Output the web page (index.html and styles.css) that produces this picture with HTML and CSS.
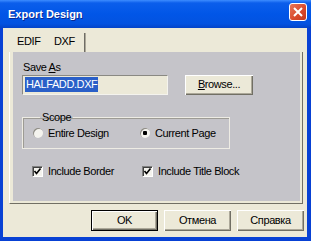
FILE: index.html
```html
<!DOCTYPE html>
<html lang="en">
  <head>
    <meta charset="UTF-8" />
    <title>Export Design</title>
    <link rel="stylesheet" href="styles.css">
  </head>
  <body>
    <div class="window">
      <!-- Title bar -->
      <div class="titlebar">
        <span class="title">Export Design</span>
        <span class="close">
          <svg width="10" height="10" viewBox="0 0 10 10">
            <path d="M1 1 L9 9 M9 1 L1 9" stroke="#fff" stroke-width="2" />
          </svg>
        </span>
      </div>

      <div class="client">
        <!-- Tabs -->
        <div class="tabs">
          <div class="tab">EDIF</div>
          <div class="tab active">DXF</div>
        </div>

        <div class="pane">
          <div class="page">
            <div class="save">
              <div class="field">
                <label>Save <u>A</u>s</label>
                <div class="input"><span class="sel">HALFADD.DXF</span></div>
              </div>
              <div class="btn browse"><u>B</u>rowse...</div>
            </div>

            <fieldset class="scope">
              <legend>Scope</legend>
              <div class="opt wide"><span class="radio"></span>Entire Design</div>
              <div class="opt"><span class="radio on"></span>Current Page</div>
            </fieldset>

            <div class="checks">
              <div class="opt wide2">
                <span class="check">
                  <svg width="9" height="9" viewBox="0 0 9 9">
                    <path d="M1.5 4 L3.5 6.5 L7.5 1.5" fill="none" stroke="#000" stroke-width="1.6" />
                  </svg>
                </span>Include Border
              </div>
              <div class="opt">
                <span class="check">
                  <svg width="9" height="9" viewBox="0 0 9 9">
                    <path d="M1.5 4 L3.5 6.5 L7.5 1.5" fill="none" stroke="#000" stroke-width="1.6" />
                  </svg>
                </span>Include Title Block
              </div>
            </div>
          </div>
        </div>

        <!-- Dialog buttons -->
        <div class="buttons">
          <div class="btn default">OK</div>
          <div class="btn">Отмена</div>
          <div class="btn">Справка</div>
        </div>
      </div>
    </div>
  </body>
</html>
```

FILE: styles.css
```css
body {
  margin: 0;
  width: 311px;
  height: 241px;
  overflow: hidden;
  background-color: #0841d4;
  font-family: "Liberation Sans", Arial, sans-serif;
  font-size: 11px;
  letter-spacing: -0.4px;
  color: #000;
}

.window {
  display: flex;
  flex-direction: column;
  height: 241px;
}

/* Blue XP title bar */
.titlebar {
  height: 28px;
  flex: none;
  display: flex;
  justify-content: space-between;
  padding: 0 4px 0 8px;
  background: linear-gradient(#3d8cff 0, #0b5eeb 3px, #0156e7 50%, #0352e0 85%, #0443c8 100%);
}

.title {
  line-height: 28px;
  font-weight: bold;
  color: #fff;
  letter-spacing: 0;
  text-shadow: 1px 1px #0b2a94;
}

.close {
  width: 16px;
  height: 16px;
  margin-top: 3px;
  border: 1px solid #fff;
  border-radius: 3px;
  background: linear-gradient(135deg, #e8765a, #d8482a 60%, #c23a1e);
  display: flex;
  align-items: center;
  justify-content: center;
}

.client {
  flex: 1;
  margin: 0 4px 4px 3px;
  background-color: #ece9d8;
  display: flex;
  flex-direction: column;
}

.tabs {
  display: flex;
  height: 22px;
  margin: 2px 0 0 6px;
}

.tab {
  line-height: 22px;
  padding-left: 8px;
  width: 30px;
}

.tab.active {
  width: 32px;
  padding-left: 7px;
  background:
    linear-gradient(#6f6d66, #6f6d66) right 1px top 3px / 1px 19px no-repeat,
    linear-gradient(#aca899, #aca899) right 0 top 3px / 1px 19px no-repeat;
}

.pane {
  margin: 0 4px 0 6px;
  border-left: 1px solid #fff;
  border-right: 1px solid #716f64;
  border-bottom: 1px solid #716f64;
  padding: 0 2px 2px 3px;
}

.page {
  height: 149px;
  background-color: #c5c4c9;
  padding: 9px 0 0 9px;
  box-sizing: border-box;
}

.save {
  display: flex;
  align-items: flex-end;
  gap: 17px;
}

.field label {
  display: block;
  line-height: 13px;
  margin-bottom: 1px;
  padding-left: 1px;
}

.input {
  width: 144px;
  height: 17px;
  border: 1px solid;
  border-color: #8a8983 #f4f3ee #f4f3ee #8a8983;
  background-color: #ece9d8;
  padding: 1px 0 0 2px;
  box-sizing: content-box;
  line-height: 15px;
  width: 142px;
}

.sel {
  display: inline-block;
  background-color: #2a5fc8;
  color: #fff;
  padding: 0 1px;
}

.btn {
  width: 67px;
  height: 21px;
  box-sizing: border-box;
  text-align: center;
  line-height: 20px;
  background-color: #ece9d8;
  box-shadow: inset 1px 1px #fff, inset -1px -1px #716f64, inset -2px -2px #aca899;
}

.browse {
  width: 68px;
  height: 20px;
  line-height: 19px;
}

.btn.default {
  border: 1px solid #000;
  line-height: 18px;
}

/* Group box */
.scope {
  width: 208px;
  box-sizing: border-box;
  margin: 16px 0 0 0;
  padding: 3px 0 8px 10px;
  border: 1px solid #eeece4;
  box-shadow: inset 1px 1px #9d9b94;
  display: flex;
}

.scope legend {
  margin-left: 7px;
  padding: 0 2px;
  line-height: 12px;
}

.opt {
  display: flex;
  align-items: center;
  gap: 5px;
  line-height: 14px;
}

.opt.wide {
  width: 107px;
}

.radio {
  width: 10px;
  height: 10px;
  border-radius: 50%;
  background-color: #f4f3ee;
  box-shadow: inset 1px 1px #8d8b85;
}

.radio.on {
  background: radial-gradient(circle, #000 2px, #f4f3ee 2.5px);
}

.checks {
  display: flex;
  margin: 15px 0 0 10px;
}

.opt.wide2 {
  width: 110px;
}

.check {
  width: 11px;
  height: 11px;
  box-sizing: border-box;
  border: 1px solid;
  border-color: #808080 #fff #fff #808080;
  box-shadow: inset 1px 1px #404040;
  background-color: #f4f3ee;
  display: flex;
  align-items: center;
  justify-content: center;
}

.buttons {
  display: flex;
  justify-content: flex-end;
  gap: 6px;
  padding: 6px 3px 0 0;
}
```
